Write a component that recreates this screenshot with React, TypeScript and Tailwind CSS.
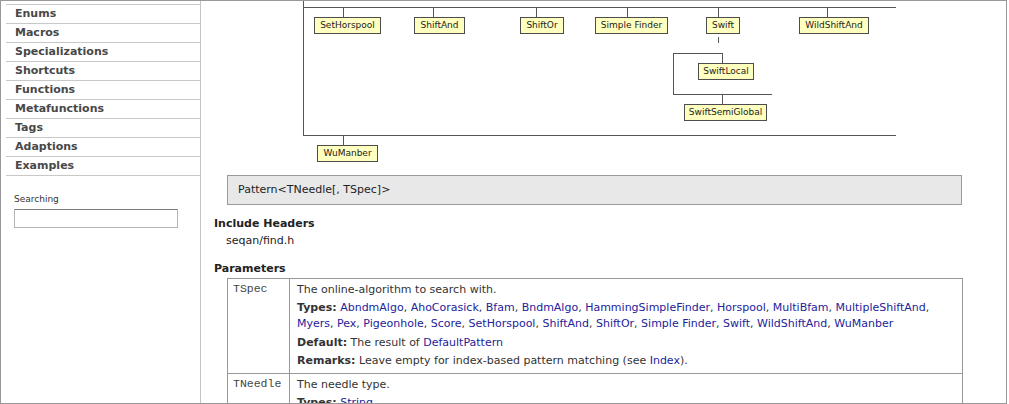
const navItems = [
  "Enums",
  "Macros",
  "Specializations",
  "Shortcuts",
  "Functions",
  "Metafunctions",
  "Tags",
  "Adaptions",
  "Examples",
];

// diagram boxes, in page coordinates
const boxes: { label: string; x: number; y: number; w: number }[] = [
  { label: "SetHorspool", x: 314, y: 17, w: 67 },
  { label: "ShiftAnd", x: 414, y: 17, w: 51 },
  { label: "ShiftOr", x: 520, y: 17, w: 44 },
  { label: "Simple Finder", x: 595, y: 17, w: 73 },
  { label: "Swift", x: 706, y: 17, w: 34 },
  { label: "WildShiftAnd", x: 799, y: 17, w: 70 },
  { label: "SwiftLocal", x: 698, y: 63, w: 56 },
  { label: "SwiftSemiGlobal", x: 684, y: 104, w: 83 },
  { label: "WuManber", x: 317, y: 145, w: 61 },
];

// [x1, y1, x2, y2]
const lines: [number, number, number, number][] = [
  [303.5, 0, 303.5, 135.5],
  [303, 7.5, 896, 7.5],
  [303, 135.5, 896, 135.5],
  [343.5, 7, 343.5, 17],
  [433.5, 7, 433.5, 17],
  [536.5, 7, 536.5, 17],
  [627.5, 7, 627.5, 17],
  [718.5, 7, 718.5, 17],
  [827.5, 7, 827.5, 17],
  [718.5, 37, 718.5, 43],
  [673.5, 53, 673.5, 94.5],
  [673, 53.5, 722.5, 53.5],
  [722.5, 53, 722.5, 63],
  [673, 94.5, 772, 94.5],
  [722.5, 94, 722.5, 104],
  [343.5, 135, 343.5, 145],
];

const types = [
  "AbndmAlgo",
  "AhoCorasick",
  "Bfam",
  "BndmAlgo",
  "HammingSimpleFinder",
  "Horspool",
  "MultiBfam",
  "MultipleShiftAnd",
];
const types2 = [
  "Myers",
  "Pex",
  "Pigeonhole",
  "Score",
  "SetHorspool",
  "ShiftAnd",
  "ShiftOr",
  "Simple Finder",
  "Swift",
  "WildShiftAnd",
  "WuManber",
];

function Link({ children }: { children: React.ReactNode }) {
  return <span className="text-[#23239a]">{children}</span>;
}

function LinkList({ items, trailingComma }: { items: string[]; trailingComma?: boolean }) {
  return (
    <>
      {items.map((t, i) => (
        <span key={t}>
          <Link>{t}</Link>
          {i < items.length - 1 || trailingComma ? ", " : ""}
        </span>
      ))}
    </>
  );
}

function Diagram() {
  return (
    <div className="relative h-[161px] shrink-0">
      <svg
        className="absolute left-0 top-0"
        width={805}
        height={161}
        viewBox="201 1 805 161"
      >
        {lines.map(([x1, y1, x2, y2], i) => (
          <line key={i} x1={x1} y1={y1} x2={x2} y2={y2} stroke="#555" strokeWidth={1} />
        ))}
      </svg>
      {boxes.map((b) => (
        <div
          key={b.label}
          className="absolute h-[17px] bg-[#ffffbf] border border-[#4d4d4d] flex items-center justify-center text-[9px] text-[#222] whitespace-nowrap"
          style={{ left: b.x - 201, top: b.y - 1, width: b.w }}
        >
          {b.label}
        </div>
      ))}
    </div>
  );
}

export default function App() {
  return (
    <div className="w-[1007px] h-[404px] border border-[#999] overflow-hidden flex bg-white text-[#333] font-['DejaVu_Sans',Verdana,sans-serif]">
      <aside className="w-[200px] shrink-0 border-r border-[#c4c4c4] flex flex-col">
        <ul className="mt-[3px] ml-[5px] border-t border-[#c8c8c8]">
          {navItems.map((item) => (
            <li
              key={item}
              className="h-[19px] border-b border-[#c8c8c8] pl-[9px] leading-[18px] text-[11px] font-bold text-[#484848]"
            >
              {item}
            </li>
          ))}
        </ul>
        <div className="pl-[13px] mt-[17px]">
          <div className="text-[9px] leading-[13px] text-[#333]">Searching</div>
          <div className="mt-[3px] w-[164px] h-[19px] border border-[#b4b4b4] border-t-[#7a7a7a]" />
        </div>
      </aside>

      <main className="flex-1 flex flex-col pl-[13px]">
        <div className="-ml-[13px]">
          <Diagram />
        </div>

        <div className="mt-[13px] ml-[13px] w-[735px] h-[30px] shrink-0 bg-[#e8e8e8] border border-[#9a9a9a] pl-[10px] flex items-center text-[11px] text-[#222]">
          Pattern&lt;TNeedle[, TSpec]&gt;
        </div>

        <h3 className="mt-[11px] text-[11px] leading-[16px] font-bold text-[#222]">Include Headers</h3>
        <p className="ml-[12px] mt-[1px] text-[11px] leading-[16px] text-[#222]">seqan/find.h</p>

        <h3 className="mt-[12px] text-[11px] leading-[16px] font-bold text-[#222]">Parameters</h3>

        <table className="mt-[1px] ml-[13px] w-[736px] border-collapse text-[11px] leading-[16px] text-[#333]">
          <tbody>
            <tr>
              <td className="w-[62px] align-top border border-[#999] pl-[5px] pt-[2px] font-['Liberation_Mono',monospace] text-[11.5px] text-[#444]">
                TSpec
              </td>
              <td className="align-top border border-[#999] pl-[7px] pt-[3px] pb-[4px]">
                <p>The online-algorithm to search with.</p>
                <p className="mt-[2px]">
                  <b>Types:</b> <LinkList items={types} trailingComma />
                  <br />
                  <LinkList items={types2} />
                </p>
                <p className="mt-[3px]">
                  <b>Default:</b> The result of <Link>DefaultPattern</Link>
                </p>
                <p className="mt-[2px]">
                  <b>Remarks:</b> Leave empty for index-based pattern matching (see <Link>Index</Link>).
                </p>
              </td>
            </tr>
            <tr>
              <td className="align-top border border-[#999] pl-[5px] pt-[2px] font-['Liberation_Mono',monospace] text-[11.5px] text-[#444]">
                TNeedle
              </td>
              <td className="align-top border border-[#999] pl-[7px] pt-[3px] pb-[4px]">
                <p>The needle type.</p>
                <p className="mt-[2px]">
                  <b>Types:</b> <Link>String</Link>
                </p>
              </td>
            </tr>
          </tbody>
        </table>
      </main>
    </div>
  );
}
